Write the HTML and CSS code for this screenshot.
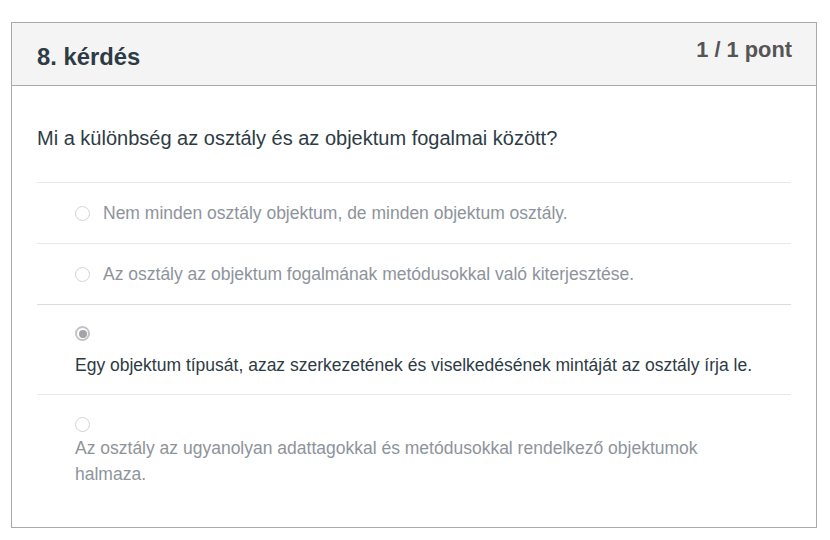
FILE: index.html
```html
<!DOCTYPE html>
<html lang="hu">
<head>
<meta charset="utf-8">
<link rel="stylesheet" href="styles.css">
</head>
<body>
<div class="card">
  <div class="header">
    <h2 class="title">8. kérdés</h2>
    <span class="points">1 / 1 pont</span>
  </div>
  <div class="body">
    <p class="question">Mi a különbség az osztály és az objektum fogalmai között?</p>
    <div class="option inline">
      <span class="radio"></span>
      <span class="label">Nem minden osztály objektum, de minden objektum osztály.</span>
    </div>
    <div class="option inline">
      <span class="radio"></span>
      <span class="label">Az osztály az objektum fogalmának metódusokkal való kiterjesztése.</span>
    </div>
    <div class="option stacked selected">
      <span class="radio checked"></span>
      <span class="label">Egy objektum típusát, azaz szerkezetének és viselkedésének mintáját az osztály írja le.</span>
    </div>
    <div class="option stacked last">
      <span class="radio"></span>
      <span class="label">Az osztály az ugyanolyan adattagokkal és metódusokkal rendelkező objektumok halmaza.</span>
    </div>
  </div>
</div>
</body>
</html>
```

FILE: styles.css
```css
* { box-sizing: border-box; }
body {
  margin: 0;
  background: #fff;
  font-family: "Liberation Sans", Arial, sans-serif;
  color: #2d3b45;
}
.card {
  margin: 22px 0 0 11px;
  width: 806px;
  height: 506px;
  border: 1px solid #aaaaaa;
}
.header {
  height: 63px;
  background: #f4f4f4;
  border-bottom: 1px solid #aaaaaa;
  padding: 0 24px 0 25px;
  display: flex;
  justify-content: space-between;
  align-items: flex-start;
}
.title {
  margin: 0;
  font-size: 23.8px;
  font-weight: bold;
  line-height: 28px;
  padding-top: 20px;
  color: #2d3b45;
}
.points {
  font-size: 21.8px;
  font-weight: bold;
  line-height: 26px;
  padding-top: 14px;
  color: #555555;
}
.body {
  padding: 0 25px;
}
.question {
  margin: 0;
  font-size: 20px;
  line-height: 24px;
  padding: 40px 0 32px;
  border-bottom: 1px solid #e8e8e8;
}
.option {
  border-bottom: 1px solid #e8e8e8;
  font-size: 17.5px;
  color: #8d949b;
}
.option.inline {
  display: flex;
  align-items: center;
  height: 61px;
  padding-left: 38px;
  gap: 13px;
}
.option.stacked {
  display: flex;
  flex-direction: column;
  align-items: flex-start;
  padding-left: 38px;
}
.option.selected {
  border-top: 1px solid #dcdcdc;
  margin-top: -1px;
  padding-top: 21px;
  padding-bottom: 17px;
  color: #2d3b45;
  gap: 13px;
  line-height: 23px;
}
.option.last {
  border-bottom: none;
  padding-top: 22px;
  padding-right: 76px;
  line-height: 26px;
  gap: 3px;
}
.radio {
  flex: none;
  width: 15px;
  height: 15px;
  border-radius: 50%;
  border: 1px solid #d3d3d3;
  background: #fff;
  position: relative;
}
.radio.checked {
  border: 2px solid #c4c4c8;
}
.radio.checked::after {
  content: "";
  position: absolute;
  left: 1.5px;
  top: 1.5px;
  width: 8px;
  height: 8px;
  border-radius: 50%;
  background: #a3a3a8;
}
```
